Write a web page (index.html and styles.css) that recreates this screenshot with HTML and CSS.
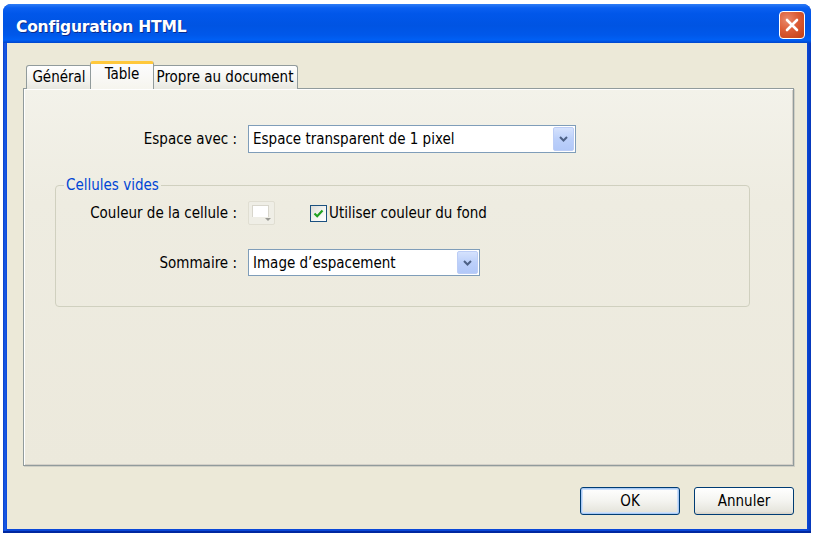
FILE: index.html
```html
<!DOCTYPE html>
<html lang="fr">
<head>
<meta charset="utf-8">
<title>Configuration HTML</title>
<link rel="stylesheet" href="styles.css">
</head>
<body>
<div class="window">
  <div class="titlebar">
    <span class="title">Configuration HTML</span>
    <button class="close" aria-label="Fermer">
      <svg width="14" height="14" viewBox="0 0 14 14"><path d="M2 2 L12 12 M12 2 L2 12" stroke="#fff" stroke-width="2.6" stroke-linecap="round"/></svg>
    </button>
  </div>
  <div class="client">
    <div class="tabs">
      <div class="tab tab-general">Général</div>
      <div class="tab active">Table</div>
      <div class="tab tab-doc">Propre au document</div>
    </div>
    <div class="panel">
      <div class="row row-top">
        <label class="lbl lbl-outer">Espace avec :</label>
        <div class="select select-wide">
          <span class="select-text">Espace transparent de 1 pixel</span>
          <span class="select-btn"><svg width="9" height="6" viewBox="0 0 9 6"><path d="M1 1 L4.5 4.5 L8 1" fill="none" stroke="#4d6185" stroke-width="2"/></svg></span>
        </div>
      </div>
      <fieldset class="group">
        <legend>Cellules vides</legend>
        <div class="row">
          <label class="lbl lbl-inner">Couleur de la cellule :</label>
          <div class="swatch"><span class="swatch-fill"></span><span class="swatch-arrow"></span></div>
          <label class="check">
            <span class="box"><svg width="11" height="11" viewBox="0 0 11 11"><path d="M1.5 5.5 L4.2 8.2 L9.5 2.5" fill="none" stroke="#21a121" stroke-width="2.2"/></svg></span>
            Utiliser couleur du fond
          </label>
        </div>
        <div class="row row-gap">
          <label class="lbl lbl-inner">Sommaire :</label>
          <div class="select select-narrow">
            <span class="select-text">Image d’espacement</span>
            <span class="select-btn"><svg width="9" height="6" viewBox="0 0 9 6"><path d="M1 1 L4.5 4.5 L8 1" fill="none" stroke="#4d6185" stroke-width="2"/></svg></span>
          </div>
        </div>
      </fieldset>
    </div>
    <div class="buttons">
      <button class="btn default">OK</button>
      <button class="btn">Annuler</button>
    </div>
  </div>
</div>
</body>
</html>
```
FILE: styles.css
```css
* { box-sizing: border-box; }
html, body { margin: 0; padding: 0; background: #ffffff; }
body {
  font-family: "DejaVu Sans Condensed", "DejaVu Sans", sans-serif;
  font-size: 15px;
  color: #000;
}
.window {
  margin: 4px 0 0 3px;
  width: 808px;
  height: 529px;
  display: flex;
  flex-direction: column;
  border-radius: 8px 8px 0 0;
  background: linear-gradient(90deg, #0840c8 0, #1a5ae6 2px, #0a48d8 4px, #0a48d8 calc(100% - 4px), #0838b8 100%);
  padding: 0 4px 4px 4px;
  box-shadow: inset 0 -2px 0 #0028a0;
}
.titlebar {
  height: 39px;
  margin: 0 -4px;
  padding: 0 6px 0 10px;
  display: flex;
  align-items: center;
  justify-content: space-between;
  border-radius: 8px 8px 0 0;
  background: linear-gradient(180deg, #2e7cf5 0%, #0a5ff0 10%, #0157ea 25%, #0054e3 55%, #0058ea 80%, #0060f5 92%, #0045cc 100%);
}
.title {
  font-family: "DejaVu Sans", sans-serif;
  font-weight: bold;
  font-size: 15.5px;
  color: #fff;
  padding-top: 6px;
  padding-left: 3px;
  text-shadow: 1px 1px 0 #0a2c8c;
  letter-spacing: -0.2px;
}
.close {
  width: 26px;
  height: 28px;
  margin-top: 2px;
  padding: 0;
  border: 1px solid #fff;
  border-radius: 4px;
  background: radial-gradient(circle at 30% 30%, #e98a6c 0%, #dc5c35 45%, #c13d13 100%);
  display: flex;
  align-items: center;
  justify-content: center;
}
.client {
  flex: 1;
  background: #ece9d8;
  padding: 18px 13px 0 16px;
  display: flex;
  flex-direction: column;
}
.tabs {
  display: flex;
  align-items: flex-end;
  height: 28px;
  padding-left: 3px;
  position: relative;
  z-index: 1;
  margin-bottom: -1px;
}
.tab {
  height: 24px;
  line-height: 22px;
  text-align: center;
  border: 1px solid #919b9c;
  border-bottom: none;
  border-radius: 3px 3px 0 0;
  background: linear-gradient(180deg, #ffffff 0%, #f3f3ef 60%, #e8e8e0 100%);
  white-space: nowrap;
}
.tab-general { width: 66px; }
.tab-doc { width: 146px; margin-left: -1px; }
.tab.active {
  height: 28px;
  width: 64px;
  background: linear-gradient(180deg, #fcfcfe 0%, #f6f5ee 100%);
  border-top: 3px solid #ffc83c;
  line-height: 21px;
  margin-left: -2px;
  margin-right: -1px;
  position: relative;
  z-index: 2;
}
.panel {
  height: 378px;
  border: 1px solid #919b9c;
  box-shadow: inset 1px 1px 0 #ffffff, inset -1px -1px 0 #d4d0c8, 1px 1px 0 #d0cfc5;
  background: linear-gradient(180deg, #f3f2ea 0%, #eeece1 30%, #ece9dc 100%);
  padding-top: 36px;
}
.row {
  display: flex;
  align-items: center;
}
.lbl {
  text-align: right;
  padding-right: 11px;
  flex: none;
  white-space: nowrap;
}
.lbl-outer { width: 224px; }
.lbl-inner { width: 192px; }
.select {
  height: 28px;
  border: 1px solid #7f9db9;
  background: #fff;
  display: flex;
  align-items: center;
  justify-content: space-between;
  padding: 1px;
}
.select-wide { width: 328px; }
.select-narrow { width: 232px; height: 27px; }
.select-text { padding-left: 3px; white-space: nowrap; }
.select-btn {
  width: 21px;
  height: 100%;
  border: 1px solid #bccdf6;
  border-radius: 2px;
  background: linear-gradient(180deg, #d5e2fd 0%, #bcd0fa 50%, #b2c8f8 100%);
  display: flex;
  align-items: center;
  justify-content: center;
}
.group {
  margin: 23px 43px 0 31px;
  border: 1px solid #d0d0bf;
  border-radius: 4px;
  padding: 7px 0 30px 0;
  min-width: 0;
}
.group legend {
  color: #0046d5;
  padding: 0 2px;
  margin-left: 8px;
  line-height: 18px;
}
.swatch {
  width: 27px;
  height: 24px;
  border: 1px solid #e0ded2;
  border-radius: 2px;
  background: #efeee6;
  position: relative;
  padding: 3px;
}
.swatch-fill {
  display: block;
  width: 17px;
  height: 12px;
  background: #fff;
  border: 1px solid #d8d6cc;
  border-bottom: none;
}
.swatch-arrow {
  position: absolute;
  right: 3px;
  bottom: 3px;
  width: 0;
  height: 0;
  border-left: 3px solid transparent;
  border-right: 3px solid transparent;
  border-top: 3px solid #9a9a94;
}
.check {
  margin-left: 35px;
  display: flex;
  align-items: center;
  gap: 2px;
  white-space: nowrap;
}
.box {
  width: 17px;
  height: 17px;
  border: 1px solid #1c5180;
  background: linear-gradient(135deg, #dcdcd7 0%, #f3f3ef 50%, #ffffff 100%);
  display: flex;
  align-items: center;
  justify-content: center;
}
.row-gap { margin-top: 24px; }
.buttons {
  display: flex;
  justify-content: flex-end;
  gap: 14px;
  margin-top: 21px;
}
.btn {
  width: 100px;
  height: 28px;
  font-family: "DejaVu Sans Condensed", "DejaVu Sans", sans-serif;
  font-size: 15px;
  color: #000;
  border: 1px solid #003c74;
  border-radius: 3px;
  background: linear-gradient(180deg, #ffffff 0%, #f4f4f0 50%, #e6e5dd 90%, #d6d0c5 100%);
  padding: 0;
}
.btn.default {
  box-shadow: inset 0 0 0 1px #a9c9f4, inset 0 0 0 2px #cde0fa;
}
```
